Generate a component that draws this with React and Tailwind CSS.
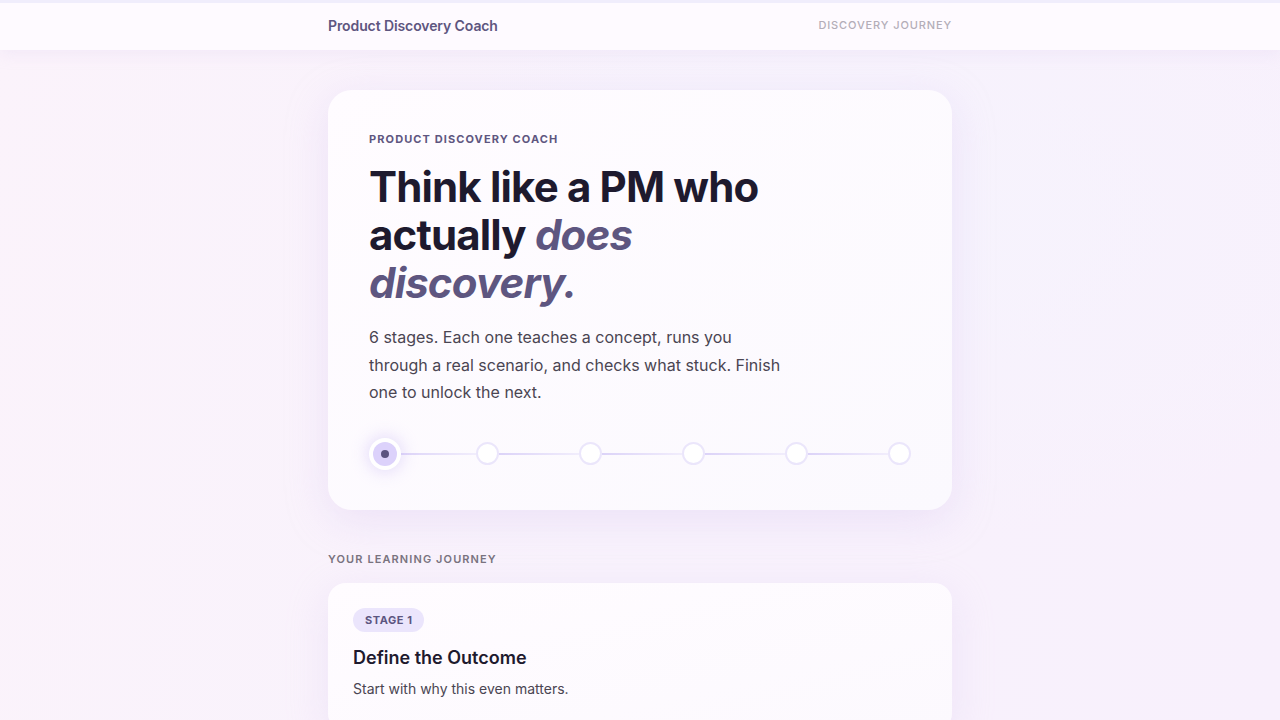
import { useState } from 'react';

const stages = [1, 2, 3, 4, 5, 6];

const ProgressTrack = ({ active = 0 }) => (
  <div className="flex items-center pl-1">
    {stages.map((s, i) => (
      <div key={s} className={`flex items-center ${i < stages.length - 1 ? 'flex-1' : ''}`}>
        {i === active ? (
          <div className="w-6 h-6 rounded-full bg-[#dcd2fb] flex items-center justify-center shadow-[0_0_0_4px_#ffffff,0_0_16px_6px_rgba(200,185,245,0.45)] relative z-10">
            <div className="w-2 h-2 rounded-full bg-[#5b5380]" />
          </div>
        ) : (
          <div className="w-[23px] h-[23px] rounded-full bg-white border-2 border-[#ebe6fb]" />
        )}
        {i < stages.length - 1 && (
          <div className="flex-1 h-[2px] bg-gradient-to-r from-[#dcd3f8] to-[#f1edfc]" />
        )}
      </div>
    ))}
  </div>
);

const App = () => {
  const [current] = useState(0);

  return (
    <div
      className="min-h-screen bg-[#f9f2fc] bg-[radial-gradient(ellipse_at_70%_30%,#f6f3fd_0%,transparent_45%),linear-gradient(100deg,#fbf3fb_0%,#f8f2fc_50%,#f8f0fc_100%)]"
      style={{ fontFamily: 'Inter, "Noto Sans", sans-serif' }}
    >
      {/* Header */}
      <div className="border-t-[3px] border-[#f0edfc] bg-[#fefbff]/90 shadow-[0_4px_14px_rgba(220,205,240,0.25)]">
        <div className="max-w-[624px] mx-auto h-[47px] pb-[3px] flex items-center justify-between">
          <span className="text-[14px] font-semibold text-[#5e5680] tracking-[-0.1px]">Product Discovery Coach</span>
          <span className="text-[11px] font-medium tracking-[0.08em] text-[#b3adb8]">DISCOVERY JOURNEY</span>
        </div>
      </div>

      <main className="max-w-[624px] mx-auto pt-10">
        {/* Hero */}
        <section className="rounded-[24px] bg-gradient-to-br from-[#fffcff] to-[#fbf9fe] shadow-[0_10px_40px_rgba(215,195,240,0.35)] px-[41px] pt-[41px] pb-[44px]">
          <p className="text-[11px] font-bold tracking-[0.1em] text-[#5e5680] leading-4">PRODUCT DISCOVERY COACH</p>
          <h1 className="mt-4 max-w-[430px] text-[42px] leading-[48px] font-bold tracking-[-0.02em] text-[#1e1a2e]">
            Think like a PM who actually <em className="text-[#5e5680] font-bold">does discovery.</em>
          </h1>
          <p className="mt-[17px] max-w-[420px] text-[16px] leading-[27.5px] text-[#4a4552]">
            6 stages. Each one teaches a concept, runs you through a real scenario, and checks what stuck. Finish one to unlock the next.
          </p>
          <div className="mt-[35px]">
            <ProgressTrack active={current} />
          </div>
        </section>

        {/* Journey */}
        <p className="mt-[41px] text-[11px] font-semibold tracking-[0.1em] text-[#79737f] leading-4">YOUR LEARNING JOURNEY</p>
        <div className="mt-4 rounded-[18px] bg-gradient-to-br from-[#fffcff] to-[#fcf9fe] shadow-[0_10px_40px_rgba(215,195,240,0.3)] px-[25px] pt-[23px] pb-8">
          <span className="inline-flex items-center h-6 rounded-full bg-[#ebe5fc] px-3 text-[11px] font-bold tracking-[0.05em] text-[#5c5580]">STAGE 1</span>
          <h2 className="mt-3 text-[18px] font-semibold text-[#1e1a2e] leading-7">Define the Outcome</h2>
          <p className="mt-[7px] text-[14px] text-[#4a4552] leading-5">Start with why this even matters.</p>
        </div>
      </main>
    </div>
  );
};

export default App;
